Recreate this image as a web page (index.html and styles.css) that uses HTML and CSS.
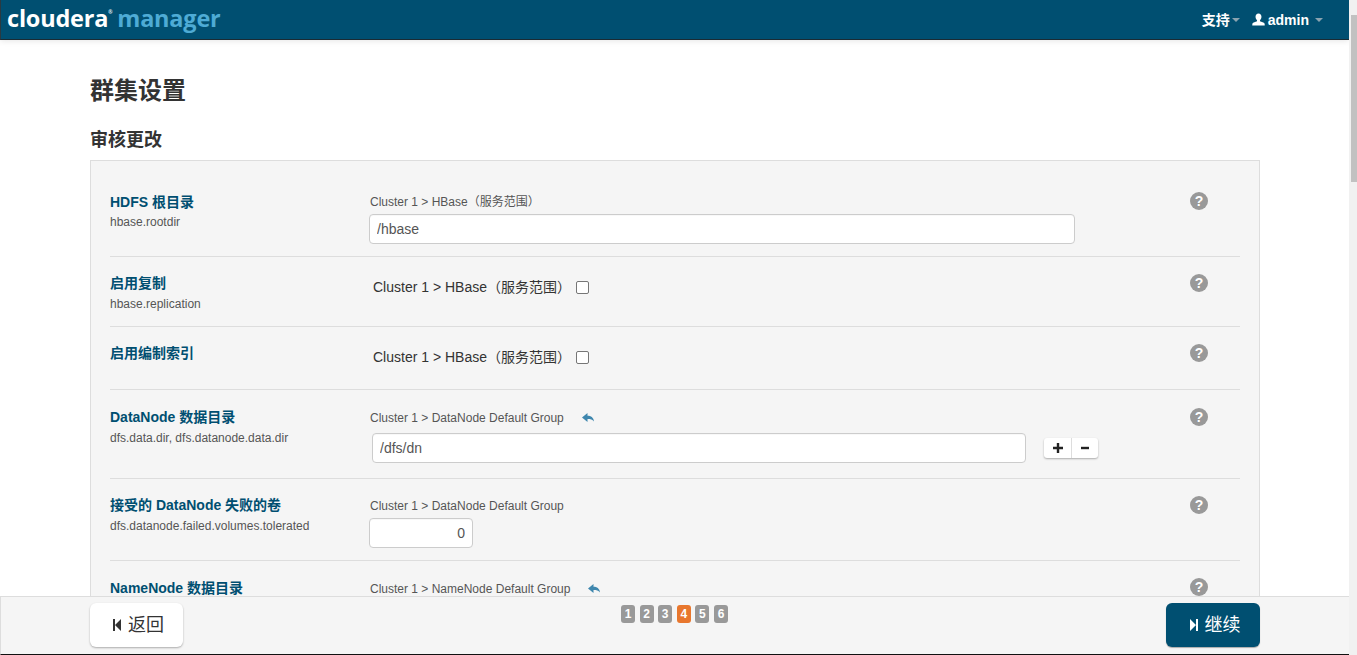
FILE: index.html
```html
<!DOCTYPE html>
<html lang="zh">
<head>
    <meta charset="UTF-8" />
    <title>群集设置</title>
    <link rel="stylesheet" href="styles.css">
</head>
<body>
    <!-- Top bar -->
    <header class="navbar">
        <a class="brand"><span class="brand-main">cloudera<sup class="brand-reg">®</sup></span><span class="brand-sub">manager</span></a>
        <nav class="nav-right">
            <a class="nav-item">支持<i class="caret caret-tight"></i></a>
            <a class="nav-item nav-user">
                <svg class="user-icon" viewBox="0 0 14 14"><path d="M7 0.5c2 0 3.2 1.5 3.2 3.5 0 1.5-.7 3-1.6 3.7v1.1c1.6.6 4.4 1.3 4.9 2.4.2.5.2 1.3.2 2.3H.3c0-1 0-1.8.2-2.3.5-1.1 3.3-1.8 4.9-2.4V7.700C4.500 7 3.800 5.500 3.800 4 3.800 2 5 .5 7 .5z"/></svg>
                admin<i class="caret"></i>
            </a>
        </nav>
    </header>

    <main class="content">
        <h1>群集设置</h1>
        <h2>审核更改</h2>

        <div class="panel">
            <div class="row row-first">
                <div class="name">
                    <div class="title">HDFS 根目录</div>
                    <div class="prop">hbase.rootdir</div>
                </div>
                <div class="value">
                    <div class="scope">Cluster 1 &gt; HBase（服务范围）</div>
                    <input class="text-input wide" type="text" value="/hbase" />
                </div>
                <div class="help">?</div>
            </div>

            <div class="row row-check">
                <div class="name">
                    <div class="title">启用复制</div>
                    <div class="prop">hbase.replication</div>
                </div>
                <div class="value check-line">
                    <span>Cluster 1 &gt; HBase（服务范围）</span>
                    <span class="checkbox"></span>
                </div>
                <div class="help">?</div>
            </div>

            <div class="row row-check-short">
                <div class="name">
                    <div class="title">启用编制索引</div>
                </div>
                <div class="value check-line">
                    <span>Cluster 1 &gt; HBase（服务范围）</span>
                    <span class="checkbox"></span>
                </div>
                <div class="help">?</div>
            </div>

            <div class="row row-multi">
                <div class="name">
                    <div class="title">DataNode 数据目录</div>
                    <div class="prop">dfs.data.dir, dfs.datanode.data.dir</div>
                </div>
                <div class="value">
                    <div class="scope">Cluster 1 &gt; DataNode Default Group
                        <svg class="undo" viewBox="0 0 12 10"><path d="M0 4.500 5.500 0v2.800C9 2.800 11.500 4.500 12 8.500 10.500 6.500 8.500 6 5.500 6v3z"/></svg>
                    </div>
                    <div class="multi-line">
                        <input class="text-input multi" type="text" value="/dfs/dn" />
                        <div class="btn-group">
                            <span class="mini-btn">
                                <svg viewBox="0 0 10 10"><path d="M3.800 0h2.400v3.800H10v2.400H6.200V10H3.800V6.200H0V3.800h3.800z"/></svg>
                            </span>
                            <span class="mini-btn">
                                <svg viewBox="0 0 10 10"><path d="M1 3.800h8v2.400H1z"/></svg>
                            </span>
                        </div>
                    </div>
                </div>
                <div class="help">?</div>
            </div>

            <div class="row">
                <div class="name">
                    <div class="title">接受的 DataNode 失败的卷</div>
                    <div class="prop">dfs.datanode.failed.volumes.tolerated</div>
                </div>
                <div class="value">
                    <div class="scope">Cluster 1 &gt; DataNode Default Group</div>
                    <input class="text-input number" type="text" value="0" />
                </div>
                <div class="help">?</div>
            </div>

            <div class="row row-last">
                <div class="name">
                    <div class="title">NameNode 数据目录</div>
                    <div class="prop">dfs.name.dir, dfs.namenode.name.dir</div>
                </div>
                <div class="value">
                    <div class="scope">Cluster 1 &gt; NameNode Default Group
                        <svg class="undo" viewBox="0 0 12 10"><path d="M0 4.500 5.500 0v2.800C9 2.800 11.500 4.500 12 8.500 10.500 6.500 8.500 6 5.500 6v3z"/></svg>
                    </div>
                </div>
                <div class="help">?</div>
            </div>
        </div>
    </main>

    <!-- Wizard footer -->
    <footer class="footer">
        <a class="btn btn-back">
            <svg class="step-icon" viewBox="0 0 8 12"><path d="M0 0h2v12H0zM2 6l6-6v12z"/></svg>
            返回
        </a>
        <div class="steps">
            <span class="step">1</span>
            <span class="step">2</span>
            <span class="step">3</span>
            <span class="step step-active">4</span>
            <span class="step">5</span>
            <span class="step">6</span>
        </div>
        <a class="btn btn-next">
            <svg class="step-icon" viewBox="0 0 8 12"><path d="M8 0H6v12h2zM6 6 0 0v12z"/></svg>
            继续
        </a>
    </footer>

    <!-- Scrollbar -->
    <div class="scrollbar"><div class="scroll-thumb"></div></div>
</body>
</html>
```

FILE: styles.css
```css
* {
    box-sizing: border-box;
}

html, body {
    height: 100%;
}

body {
    margin: 0;
    overflow: hidden;
    background: #fff;
    color: #333;
    font-family: "Liberation Sans", "Noto Sans CJK SC", sans-serif;
    font-size: 14px;
    line-height: 20px;
    display: flex;
    flex-direction: column;
    padding-right: 8px;
}

/* Top bar */
.navbar {
    flex: none;
    height: 40px;
    background: #004f71;
    border-bottom: 1px solid #1b2b33;
    border-left: 1px solid #2a3a42;
    box-shadow: 0 1px 6px rgba(0, 0, 0, 0.1);
    display: flex;
    justify-content: space-between;
    align-items: center;
    padding: 0 26px 0 6px;
}

.brand {
    font-family: "Open Sans", sans-serif;
    font-size: 23.5px;
    line-height: 36px;
    font-weight: 700;
    letter-spacing: -0.2px;
    margin-top: -4px;
    white-space: nowrap;
}

.brand-main {
    color: #fff;
}

.brand-reg {
    font-size: 5px;
    line-height: 0;
    vertical-align: 13px;
}

.brand-sub {
    color: #4eabd5;
    margin-left: 5px;
}

.nav-right {
    display: flex;
    align-items: center;
    color: #fff;
    font-weight: bold;
    font-size: 14px;
}

.nav-item {
    display: flex;
    align-items: center;
}

.nav-user {
    margin-left: 12px;
}

.user-icon {
    width: 13px;
    height: 13px;
    fill: #fff;
    margin-right: 3px;
}

.caret {
    width: 0;
    height: 0;
    margin-left: 6px;
    border-left: 4px solid transparent;
    border-right: 4px solid transparent;
    border-top: 4px solid #8aa3b0;
}

.caret-tight {
    margin-left: 2px;
}

/* Page content */
.content {
    flex: 1;
    min-height: 0;
    overflow: hidden;
    padding: 0 89px 0 90px;
}

h1 {
    margin: 35px 0 0;
    font-size: 24px;
    line-height: 32px;
    font-weight: bold;
}

h2 {
    margin: 21px 0 0;
    font-size: 18px;
    line-height: 24px;
    font-weight: bold;
}

.panel {
    margin-top: 8px;
    padding: 14px 19px 0;
    background: #f5f5f5;
    border: 1px solid #ddd;
}

.row {
    display: flex;
    align-items: flex-start;
    padding: 17px 0 12px;
    border-bottom: 1px solid #ddd;
}

.row-check {
    height: 70px;
}

.row-check-short {
    height: 63px;
}

.row-multi {
    padding-top: 18px;
    padding-bottom: 15px;
}

.row-last {
    padding-top: 18px;
    border-bottom: none;
}

.name {
    flex: none;
    width: 260px;
}

.title {
    margin: -1px 0 1px;
    color: #004f71;
    font-weight: bold;
    font-size: 14px;
}

.row-first .title {
    margin: 0;
}

.prop {
    color: #555;
    font-size: 12px;
    line-height: 20px;
}

.value {
    flex: 1;
    min-width: 0;
}

.scope {
    color: #555;
    font-size: 12px;
    line-height: 20px;
    margin-bottom: 2px;
    display: flex;
    align-items: center;
}

.row-multi .scope {
    margin-bottom: 5px;
}

.undo {
    width: 12px;
    height: 10px;
    fill: #3f87ae;
    margin-left: 18px;
}

.check-line {
    display: flex;
    align-items: center;
    padding: 3px 0 0 3px;
    color: #333;
    font-size: 14px;
}

.checkbox {
    width: 13px;
    height: 13px;
    margin-left: 5px;
    background: #fff;
    border: 1px solid #767676;
    border-radius: 2px;
}

.text-input {
    display: block;
    height: 30px;
    margin-left: -1px;
    padding: 4px 7px;
    background: #fff;
    border: 1px solid #ccc;
    border-radius: 4px;
    color: #555;
    font-family: inherit;
    font-size: 14px;
    box-shadow: inset 0 1px 1px rgba(0, 0, 0, 0.03);
}

.wide {
    width: 706px;
}

.multi {
    width: 654px;
    margin-left: 2px;
}

.number {
    width: 104px;
    text-align: right;
}

.multi-line {
    display: flex;
    align-items: center;
}

.btn-group {
    display: flex;
    margin-left: 18px;
    background: #fff;
    border-radius: 3px;
    box-shadow: 0 1px 2px rgba(0, 0, 0, 0.3);
}

.mini-btn {
    width: 27px;
    height: 20px;
    display: flex;
    align-items: center;
    justify-content: center;
}

.mini-btn + .mini-btn {
    border-left: 1px solid #ddd;
}

.mini-btn svg {
    width: 10px;
    height: 10px;
    fill: #222;
}

.help {
    flex: none;
    width: 18px;
    height: 18px;
    margin: 0 32px 0 0;
    border-radius: 50%;
    background: #999;
    color: #fff;
    font-weight: bold;
    font-size: 14px;
    line-height: 18px;
    text-align: center;
}

.row-last .help {
    margin-top: -1px;
}

/* Wizard footer */
.footer {
    position: fixed;
    left: 0;
    right: 8px;
    bottom: 0;
    height: 59px;
    background: #f5f5f5;
    border-top: 1px solid #ddd;
    border-left: 1px solid #ddd;
    border-bottom: 1px solid #111;
    display: flex;
    justify-content: space-between;
    align-items: flex-start;
    padding: 6px 89px 0 89px;
}

.btn {
    height: 44px;
    padding-left: 4px;
    border-radius: 6px;
    display: flex;
    align-items: center;
    justify-content: center;
    font-size: 18px;
}

.btn-back {
    width: 93px;
    background: #fff;
    color: #333;
    box-shadow: 0 1px 2px rgba(0, 0, 0, 0.3);
}

.btn-next {
    width: 94px;
    background: #004f71;
    color: #fff;
    box-shadow: 0 1px 1px rgba(0, 0, 0, 0.3);
}

.step-icon {
    width: 8px;
    height: 12px;
    margin-right: 7px;
    fill: currentColor;
}

.steps {
    display: flex;
    gap: 4.6px;
    margin-top: 2px;
}

.step {
    width: 14px;
    height: 18px;
    border-radius: 3px;
    background: #999;
    color: #fff;
    font-size: 12px;
    font-weight: bold;
    line-height: 18px;
    text-align: center;
}

.step-active {
    background: #e8772e;
}

/* Scrollbar */
.scrollbar {
    position: fixed;
    top: 0;
    right: 0;
    bottom: 0;
    width: 8px;
    background: #f1f1f1;
}

.scroll-thumb {
    position: absolute;
    top: 15px;
    right: 0;
    width: 6px;
    height: 167px;
    background: #c1c1c1;
}
```
